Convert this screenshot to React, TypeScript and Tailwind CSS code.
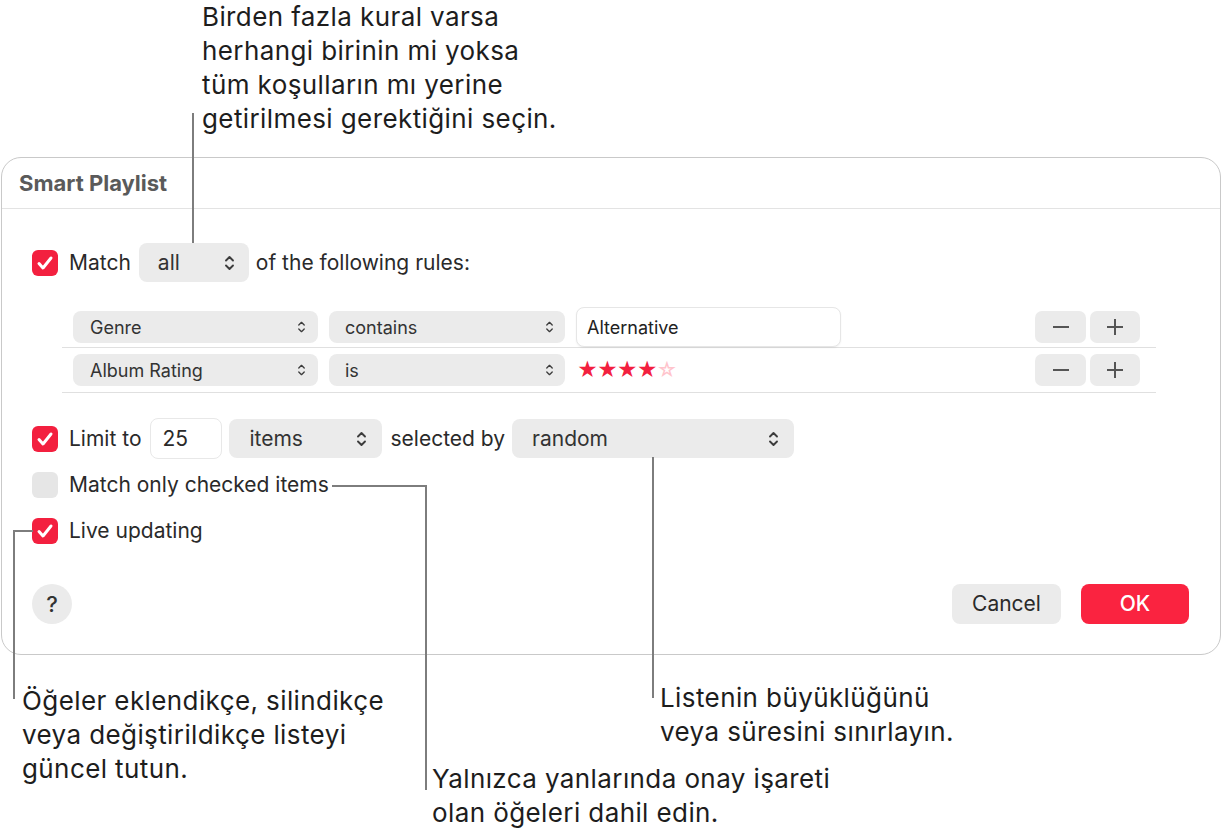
import React from "react";

const Chevrons = ({ big = false }: { big?: boolean }) => (
  <svg
    width={big ? 13 : 11}
    height={big ? 18 : 14}
    viewBox="0 0 12 18"
    fill="none"
    stroke="#3c3c3c"
    strokeWidth={big ? 1.9 : 1.7}
    strokeLinecap="round"
    strokeLinejoin="round"
  >
    <path d="M2.5 6.5 L6 3 L9.5 6.5" />
    <path d="M2.5 11.5 L6 15 L9.5 11.5" />
  </svg>
);

const Checkbox = ({ checked }: { checked: boolean }) =>
  checked ? (
    <div className="w-[26px] h-[26px] rounded-[6px] bg-[#f3203f] flex items-center justify-center shrink-0">
      <svg width="18" height="16" viewBox="0 0 18 16" fill="none">
        <path
          d="M3 8.5 L7 13 L15 3"
          stroke="white"
          strokeWidth="3"
          strokeLinecap="round"
          strokeLinejoin="round"
        />
      </svg>
    </div>
  ) : (
    <div className="w-[26px] h-[26px] rounded-[6px] bg-[#e6e6e6] shrink-0" />
  );

function Select({
  label,
  className,
  big = false,
}: {
  label: string;
  className: string;
  big?: boolean;
}) {
  return (
    <div
      className={`flex items-center justify-between bg-[#ebebeb] rounded-[8px] text-[#333] shrink-0 ${className}`}
    >
      <span>{label}</span>
      <Chevrons big={big} />
    </div>
  );
}

const Stepper = () => (
  <div className="ml-auto mr-[16px] flex gap-[4px]">
    <div className="w-[51px] h-[32px] rounded-[7px] bg-[#ebebeb] flex items-center justify-center">
      <div className="w-[16px] h-[1.5px] bg-[#555]" />
    </div>
    <div className="w-[50px] h-[32px] rounded-[7px] bg-[#ebebeb] flex items-center justify-center relative">
      <div className="w-[16px] h-[1.5px] bg-[#555]" />
      <div className="absolute w-[1.5px] h-[16px] bg-[#555]" />
    </div>
  </div>
);

export default function App() {
  return (
    <div className="relative w-[1224px] h-[835px] overflow-hidden bg-white font-['Inter',sans-serif]">
      {/* top note */}
      <p className="ml-[202px] text-[26px] leading-[34px] tracking-[0.4px] text-[#1d1d1d]">
        Birden fazla kural varsa
        <br />
        herhangi birinin mi yoksa
        <br />
        tüm koşulların mı yerine
        <br />
        getirilmesi gerektiğini seçin.
      </p>

      {/* dialog */}
      <div className="mt-[21px] ml-[1px] w-[1220px] border-[1.5px] border-[#c9c9c9] rounded-[20px] bg-white">
        <div className="h-[51px] flex items-center pl-[17px] border-b border-[#e3e3e3]">
          <span className="text-[22px] font-bold text-[#5a5a5a]">Smart Playlist</span>
        </div>

        <div className="pt-[34px] pl-[30px] pr-[31px] pb-[30px] text-[#2a2a2a] text-[21px]">
          {/* match row */}
          <div className="h-[39px] flex items-center">
            <Checkbox checked />
            <span className="ml-[11px]">Match</span>
            <Select label="all" big className="ml-[8px] w-[110px] h-[39px] pl-[19px] pr-[13px]" />
            <span className="ml-[7px]">of the following rules:</span>
          </div>

          {/* rules */}
          <div className="mt-[25px] ml-[30px] w-[1094px] text-[18px]">
            <div className="h-[41px] flex items-center pl-[11px] border-b border-[#e0e0e0]">
              <Select label="Genre" className="w-[245px] h-[32px] pl-[17px] pr-[11px]" />
              <Select label="contains" className="ml-[11px] w-[236px] h-[32px] pl-[16px] pr-[10px]" />
              <div className="ml-[11px] w-[265px] h-[40px] rounded-[8px] border border-[#e6e6e6] shadow-[0_1px_2px_rgba(0,0,0,0.06)] bg-white flex items-center pl-[10px] text-[#222]">
                Alternative
              </div>
              <Stepper />
            </div>
            <div className="h-[45px] flex items-center pl-[11px] border-b border-[#e0e0e0]">
              <Select label="Album Rating" className="w-[245px] h-[32px] pl-[17px] pr-[11px]" />
              <Select label="is" className="ml-[11px] w-[236px] h-[32px] pl-[16px] pr-[10px]" />
              <div className="ml-[12px] text-[20px] tracking-[-1px] text-[#f3203f]">
                ★★★★<span className="text-[#ffc4cc]">☆</span>
              </div>
              <Stepper />
            </div>
          </div>

          {/* limit row */}
          <div className="mt-[26px] h-[39px] flex items-center">
            <Checkbox checked />
            <span className="ml-[11px]">Limit to</span>
            <div className="ml-[9px] w-[72px] h-[41px] rounded-[8px] border border-[#e8e8e8] bg-white flex items-center pl-[11px] shrink-0">
              25
            </div>
            <Select label="items" big className="ml-[7px] w-[153px] h-[39px] pl-[20px] pr-[14px]" />
            <span className="ml-[8px]">selected by</span>
            <Select label="random" big className="ml-[7px] w-[282px] h-[39px] pl-[20px] pr-[14px]" />
          </div>

          <div className="mt-[14px] h-[26px] flex items-center">
            <Checkbox checked={false} />
            <span className="ml-[11px]">Match only checked items</span>
          </div>

          <div className="mt-[20px] h-[26px] flex items-center">
            <Checkbox checked />
            <span className="ml-[11px]">Live updating</span>
          </div>

          {/* buttons */}
          <div className="mt-[40px] flex items-center">
            <div className="w-[40px] h-[40px] rounded-full bg-[#ebebeb] flex items-center justify-center text-[22px] font-medium text-[#333]">
              ?
            </div>
            <div className="ml-auto w-[109px] h-[40px] rounded-[8px] bg-[#ebebeb] flex items-center justify-center text-[#2a2a2a]">
              Cancel
            </div>
            <div className="ml-[20px] w-[108px] h-[40px] rounded-[8px] bg-[#fa2340] flex items-center justify-center text-white font-medium">
              OK
            </div>
          </div>
        </div>
      </div>

      {/* bottom notes */}
      <div className="mt-[29px] flex text-[26px] leading-[34px] tracking-[0.4px] text-[#1d1d1d]">
        <p className="ml-[22px] w-[410px]">
          Öğeler eklendikçe, silindikçe
          <br />
          veya değiştirildikçe listeyi
          <br />
          güncel tutun.
        </p>
        <div>
          <p className="pl-[228px] -mt-[3px]">
            Listenin büyüklüğünü
            <br />
            veya süresini sınırlayın.
          </p>
          <p className="mt-[13px]">
            Yalnızca yanlarında onay işareti
            <br />
            olan öğeleri dahil edin.
          </p>
        </div>
      </div>

      {/* callout lines */}
      <svg
        className="absolute inset-0 pointer-events-none"
        width="1224"
        height="835"
        fill="none"
        stroke="#7d7d7d"
        strokeWidth="2"
      >
        <path d="M193 113 V243" />
        <path d="M33 531 H14 V699" />
        <path d="M332 486 H426 V790" />
        <path d="M653 457 V698" />
      </svg>
    </div>
  );
}
